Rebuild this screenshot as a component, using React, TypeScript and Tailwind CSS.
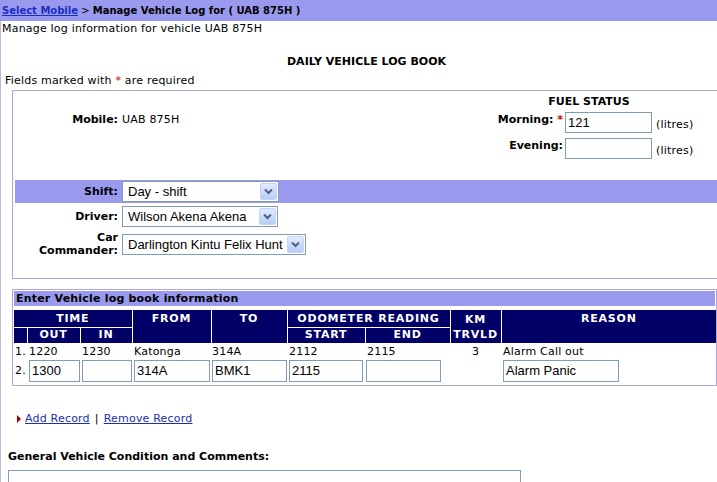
import React from 'react';

const SelectBox: React.FC<{ value: string; width: string }> = ({ value, width }) => (
  <div className={`${width} h-[21px] bg-white border border-[#7f9db9] flex items-center justify-between pl-[5px] pr-[1px] font-['Liberation_Sans',Arial,sans-serif] text-[13px] leading-none tracking-normal`}>
    <span className="whitespace-nowrap">{value}</span>
    <div className="w-[17px] h-[17px] rounded-[2px] border border-[#c3d3fd] bg-gradient-to-b from-[#e3ebfe] to-[#b7cbf6] flex items-center justify-center">
      <svg width="9" height="7" viewBox="0 0 9 7">
        <polyline points="1,1.5 4.5,5 8,1.5" fill="none" stroke="#4d6185" strokeWidth="2" />
      </svg>
    </div>
  </div>
);

const TextBox: React.FC<{ value?: string; width: string; height?: string }> = ({ value = '', width, height = 'h-[22px]' }) => (
  <div className={`${width} ${height} bg-white border border-[#7f9db9] flex items-center pl-[2px] font-['Liberation_Sans',Arial,sans-serif] text-[13px] leading-none tracking-normal`}>
    {value}
  </div>
);

const th = 'bg-[#000066] text-white font-bold border border-white text-center p-0 tracking-[0.8px]';
const td = 'p-0 pl-[2px] pt-[1px] whitespace-nowrap';

const App: React.FC = () => {
  return (
    <div className="w-[717px] h-[482px] overflow-hidden bg-white text-black text-[11px] leading-[14px] tracking-[0.2px] font-['DejaVu_Sans',Verdana,sans-serif]">
      {/* breadcrumb bar */}
      <div className="h-[21px] bg-[#9999ee] pl-[2px] flex items-center font-bold whitespace-nowrap text-[10px] tracking-normal">
        <a className="text-[#1b2fc4] underline">Select Mobile</a>
        <span className="font-normal">&nbsp;&gt;&nbsp;</span>
        <span>Manage Vehicle Log for ( UAB 875H )</span>
      </div>

      <div className="border-l border-[#b9b9d6] h-[461px]">
        <div className="pl-[1px] pt-[1px] h-[15px]">Manage log information for vehicle UAB 875H</div>

        <div className="h-[33px] flex items-end justify-center pl-[15px] font-bold tracking-normal">DAILY VEHICLE LOG BOOK</div>
        <div className="h-[21px] pl-[4px] flex items-center pt-[3px]">
          Fields marked with&nbsp;<span className="text-[#cc0000]">*</span>&nbsp;are required
        </div>

        {/* vehicle / fuel box */}
        <div className="ml-[11px] w-[720px] h-[189px] border border-[#a9a9d4] pl-[2px]">
          <div className="h-[89px] flex">
            <div className="w-[103px] shrink-0 pt-[22px] text-right font-bold tracking-normal">Mobile:</div>
            <div className="w-[367px] shrink-0 pl-[4px] pt-[22px] whitespace-nowrap">UAB 875H</div>
            <div className="w-[212px] shrink-0 pt-[4px]">
              <div className="w-[208px] text-center font-bold h-[15px] tracking-normal">FUEL STATUS</div>
              <div className="flex items-start mt-[2px]">
                <div className="w-[78px] shrink-0 text-right font-bold pt-[1px] whitespace-nowrap tracking-normal">
                  Morning: <span className="text-[#cc0000]">*</span>
                </div>
                <div className="ml-[2px] shrink-0"><TextBox value="121" width="w-[87px]" height="h-[21px]" /></div>
                <div className="ml-[4px] pt-[6px] whitespace-nowrap">(litres)</div>
              </div>
              <div className="flex items-start mt-[5px]">
                <div className="w-[78px] shrink-0 text-right font-bold pt-[1px] tracking-normal">Evening:</div>
                <div className="ml-[2px] shrink-0"><TextBox width="w-[87px]" height="h-[21px]" /></div>
                <div className="ml-[4px] pt-[6px] whitespace-nowrap">(litres)</div>
              </div>
            </div>
          </div>

          <div className="h-[23px] bg-[#9999ee] flex items-center">
            <div className="w-[103px] shrink-0 text-right font-bold tracking-normal">Shift:</div>
            <div className="ml-[4px]"><SelectBox value="Day - shift" width="w-[157px]" /></div>
          </div>
          <div className="h-[27px] flex items-center">
            <div className="w-[103px] shrink-0 text-right font-bold tracking-normal">Driver:</div>
            <div className="ml-[4px]"><SelectBox value="Wilson Akena Akena" width="w-[156px]" /></div>
          </div>
          <div className="h-[28px] flex items-center">
            <div className="w-[103px] shrink-0 text-right font-bold leading-[13px] tracking-normal">Car<br />Commander:</div>
            <div className="ml-[4px]"><SelectBox value="Darlington Kintu Felix Hunt" width="w-[184px]" /></div>
          </div>
        </div>

        {/* log table box */}
        <div className="ml-[11px] mt-[10px] w-[705px] h-[97px] border border-[#a9a9d4] p-[1px]">
          <div className="h-[15px] bg-[#9999ee] font-bold pl-[2px] flex items-center">Enter Vehicle log book information</div>
          <table className="mt-[4px] w-[702px] border-collapse table-fixed">
            <colgroup>
              <col className="w-[13px]" />
              <col className="w-[53px]" />
              <col className="w-[52px]" />
              <col className="w-[79px]" />
              <col className="w-[76px]" />
              <col className="w-[78px]" />
              <col className="w-[85px]" />
              <col className="w-[51px]" />
              <col className="w-[215px]" />
            </colgroup>
            <thead>
              <tr className="h-[17px]">
                <th colSpan={3} className={`${th} border-t-0 border-l-0 pt-[2px]`}>TIME</th>
                <th rowSpan={2} className={`${th} align-top border-t-0 pt-[2px]`}>FROM</th>
                <th rowSpan={2} className={`${th} align-top border-t-0 pt-[2px]`}>TO</th>
                <th colSpan={2} className={`${th} border-t-0 pt-[2px]`}>ODOMETER READING</th>
                <th rowSpan={2} className={`${th} align-top border-t-0 leading-[15px] pt-[2px]`}>KM<br />TRVLD</th>
                <th rowSpan={2} className={`${th} align-top border-t-0 border-r-0 pt-[2px]`}>REASON</th>
              </tr>
              <tr className="h-[16px]">
                <th className={`${th} border-l-0`}></th>
                <th className={th}>OUT</th>
                <th className={th}>IN</th>
                <th className={th}>START</th>
                <th className={th}>END</th>
              </tr>
            </thead>
            <tbody className="tracking-[0.2px]">
              <tr className="h-[15px]">
                <td className="p-0 pl-[1px] pt-[1px]">1.</td>
                <td className={td}>1220</td>
                <td className={td}>1230</td>
                <td className={td}>Katonga</td>
                <td className="p-0 pl-[1px] pt-[1px]">314A</td>
                <td className={td}>2112</td>
                <td className={td}>2115</td>
                <td className="p-0 pt-[1px] text-center">3</td>
                <td className={td}>Alarm Call out</td>
              </tr>
              <tr className="h-[24px]">
                <td className="p-0 pl-[1px] align-middle">2.</td>
                <td className="p-0 pl-[2px]"><TextBox value="1300" width="w-[51px]" /></td>
                <td className="p-0 pl-[2px]"><TextBox width="w-[50px]" /></td>
                <td className="p-0 pl-[2px]"><TextBox value="314A" width="w-[76px]" /></td>
                <td className="p-0 pl-[1px]"><TextBox value="BMK1" width="w-[75px]" /></td>
                <td className="p-0 pl-[2px]"><TextBox value="2115" width="w-[74px]" /></td>
                <td className="p-0 pl-[1px]"><TextBox width="w-[75px]" /></td>
                <td className="p-0"></td>
                <td className="p-0 pl-[2px]"><TextBox value="Alarm Panic" width="w-[116px]" /></td>
              </tr>
            </tbody>
          </table>
        </div>

        {/* record links */}
        <div className="mt-[26px] pl-[16px] flex items-center h-[14px]">
          <svg width="4" height="8" viewBox="0 0 4 8" className="mr-[4px]">
            <polygon points="0,0 4,4 0,8" fill="#a00000" />
          </svg>
          <a className="text-[#1b2fa8] underline">Add Record</a>
          <span className="mx-[5px]">|</span>
          <a className="text-[#1b2fa8] underline">Remove Record</a>
        </div>

        <div className="mt-[24px] pl-[7px] font-bold tracking-normal">General Vehicle Condition and Comments:</div>
        <div className="mt-[6px] ml-[7px] w-[513px] h-[40px] border border-[#7f9db9]"></div>
      </div>
    </div>
  );
};

export default App;
